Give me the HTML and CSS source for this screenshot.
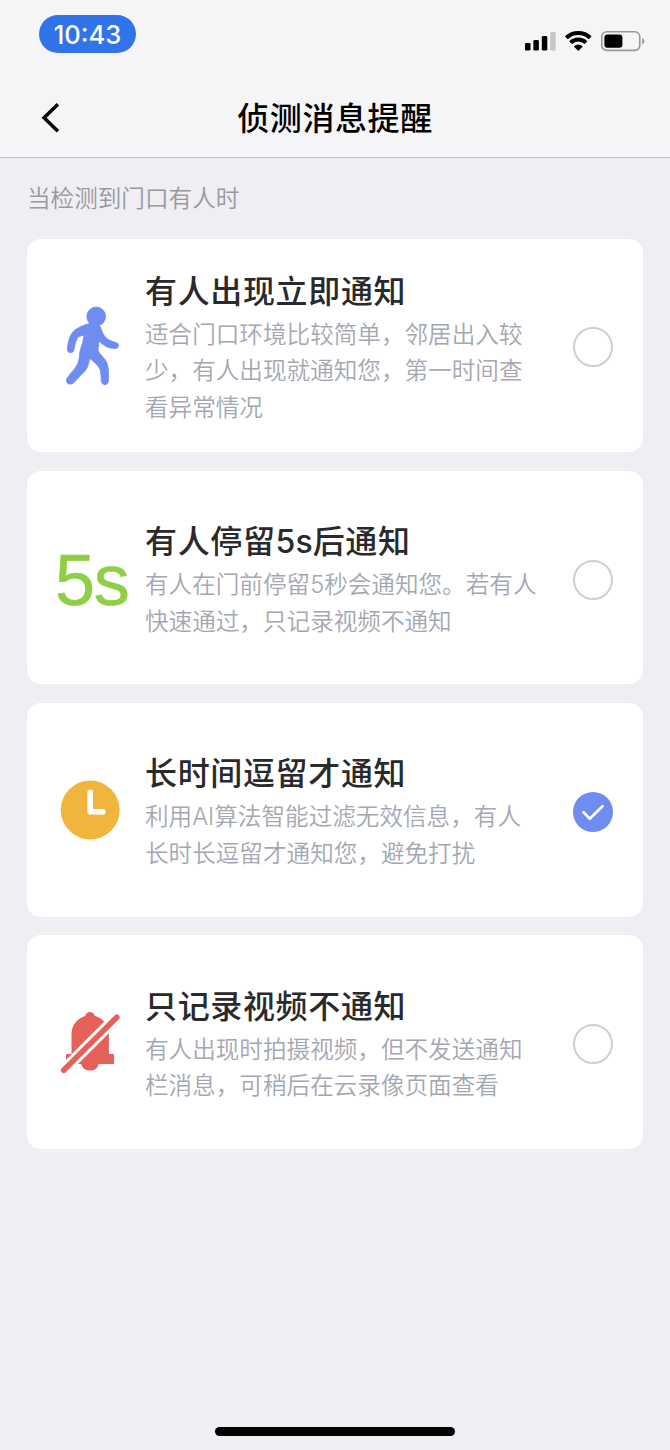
FILE: index.html
```
<!DOCTYPE html>
<html lang="zh-CN">
<head>
<meta charset="utf-8">
<title>侦测消息提醒</title>
<link rel="stylesheet" href="styles.css">
</head>
<body>
<div class="screen">
  <header class="header">
    <div class="status">
      <span class="time">10:43</span>
      <svg class="indicators" width="120" height="24" viewBox="0 0 120 24">
        <rect x="0" y="15" width="5.5" height="7.5" rx="1.3"/>
        <rect x="8.4" y="12" width="5.5" height="10.5" rx="1.3"/>
        <rect x="16.8" y="8" width="5.5" height="14.5" rx="1.3"/>
        <rect x="25.2" y="4" width="5.5" height="18.5" rx="1.3" fill="#c7c7c9"/>
        <g fill="none" stroke="#000" stroke-width="4.1">
          <path d="M41.4 9.8a17 17 0 0 1 23.8 0"/>
          <path d="M45.6 14.6a11 11 0 0 1 15.4 0"/>
        </g>
        <path d="M48.8 18.4a6.400 6.400 0 0 1 9 0l-4.500 4.500z"/>
        <rect x="76.8" y="3.8" width="38" height="18.6" rx="5" fill="none" stroke="#98989a" stroke-width="1.6"/>
        <rect x="79.4" y="6.4" width="18" height="13.4" rx="3"/>
        <path d="M117.2 10v6.4q2.2-1 2.2-3.2t-2.2-3.2z" fill="#98989a"/>
      </svg>
    </div>
    <div class="nav">
      <svg class="back" width="20" height="32" viewBox="0 0 20 32"><path d="M17.9 2.3 4.100 15.800l13.800 13.500" fill="none" stroke="#000" stroke-width="3.500"/></svg>
      <h1 class="nav-title">侦测消息提醒</h1>
    </div>
  </header>
  <main class="content">
    <p class="hint">当检测到门口有人时</p>
    <section class="card">
      <div class="icon">
        <svg width="90" height="100" viewBox="0 0 90 100" fill="#6f8df0" stroke="#6f8df0" stroke-width=".8" stroke-linejoin="round">
          <circle cx="46.2" cy="21.5" r="9.4"/>
          <path d="M38.7 28.7C31 31 25 34 22.5 37.5C19 42 18 48 17.3 54C17 58.5 23.3 59.3 24 54.5C25 49 26 44 29 41.5L34 40C33.500 46 31.500 51 30 56C29 62 29.500 66 27 70C24.500 75 20 78.500 17 83.500C14.500 88.500 20.500 91 24 87.500C28 83 33.500 78 36.500 74C38.800 70.500 38.500 66.500 40 63.500C44.500 67.500 49 71 50.200 75C51 78.500 51 82 51.300 86C52 91 58 91 58.300 86C58.800 80 58.800 73 57 68C55 63 50 60 48 55.500L49 46C53.500 50.500 58 53.500 65 53.500C69.500 53.500 69.500 48.500 66 47.500C60.500 46 55.500 43.500 53.500 39.500C51.500 35.500 50.500 30.500 47.500 29Z"/>
        </svg>
      </div>
      <div class="text">
        <h2 class="title">有人出现立即通知</h2>
        <p class="desc">适合门口环境比较简单，邻居出入较<br>少，有人出现就通知您，第一时间查<br>看异常情况</p>
      </div>
      <span class="radio"></span>
    </section>
    <section class="card">
      <div class="icon five">5s</div>
      <div class="text">
        <h2 class="title">有人停留<span class="latin">5s</span>后通知</h2>
        <p class="desc">有人在门前停留<span class="latin">5</span>秒会通知您。若有人<br>快速通过，只记录视频不通知</p>
      </div>
      <span class="radio"></span>
    </section>
    <section class="card">
      <div class="icon">
        <svg width="90" height="80" viewBox="0 0 90 80"><circle cx="40.200" cy="40" r="29.500" fill="#f1b53d"/><path d="M40.200 22.200v19.600h12.800" fill="none" stroke="#fff" stroke-width="5.600" stroke-linecap="round" stroke-linejoin="round"/></svg>
      </div>
      <div class="text">
        <h2 class="title">长时间逗留才通知</h2>
        <p class="desc">利用<span class="latin">AI</span>算法智能过滤无效信息，有人<br>长时长逗留才通知您，避免打扰</p>
      </div>
      <span class="radio checked"><svg width="40" height="40" viewBox="0 0 40 40"><path d="m10.500 20.300 6.300 6.500L29.500 14.300" fill="none" stroke="#fff" stroke-width="2.700" stroke-linecap="round" stroke-linejoin="round"/></svg></span>
    </section>
    <section class="card">
      <div class="icon bell">
        <svg width="90" height="80" viewBox="0 0 90 80">
          <g fill="#e46058">
            <circle cx="40" cy="16.800" r="4.800"/>
            <path d="M21.500 54V34a18.700 18.700 0 0 1 37.400 0v20h4.200q1 0 1 1v8q0 1-1 1H48.900a9.300 9.300 0 0 1-17.800 0H17q-1 0-1-1v-8q0-1 1-1z"/>
          </g>
          <path d="M13.500 70.500 67 17" fill="none" stroke="#fff" stroke-width="11.500"/>
          <path d="M13.700 70.300 66.800 17.200" fill="none" stroke="#e46058" stroke-width="5.600" stroke-linecap="round"/>
        </svg>
      </div>
      <div class="text">
        <h2 class="title">只记录视频不通知</h2>
        <p class="desc">有人出现时拍摄视频，但不发送通知<br>栏消息，可稍后在云录像页面查看</p>
      </div>
      <span class="radio"></span>
    </section>
  </main>
  <footer class="footer"><div class="home-bar"></div></footer>
</div>
</body>
</html>
```
FILE: styles.css
```
* { box-sizing: border-box; margin: 0; padding: 0; }
body {
  background: #eeeef3;
  font-family: "Noto Sans CJK SC", sans-serif;
}
.screen {
  display: flex;
  flex-direction: column;
  width: 670px;
  height: 1450px;
  background: #eeeef3;
}
.header {
  height: 158px;
  background: #f5f5f7;
  border-bottom: 1px solid #c3c3c7;
}
.status {
  display: flex;
  justify-content: space-between;
  align-items: flex-start;
  height: 78px;
  padding: 15px 25px 0 39px;
}
.time {
  width: 97px;
  height: 38px;
  padding-top: 1px;
  border-radius: 19px;
  background: #3173e8;
  color: #fff;
  font: 500 25.5px/38px Inter, sans-serif;
  text-align: center;
}
.indicators { margin-top: 13px; }
.nav {
  display: grid;
  grid-template-columns: 60px 1fr 60px;
  align-items: center;
  height: 79px;
}
.back { margin-left: 40px; }
.nav-title {
  padding-bottom: 4px;
  font-size: 32px;
  font-weight: 500;
  letter-spacing: .6px;
  line-height: 48px;
  text-align: center;
}
.content { flex: 1; padding: 0 27px; }
.hint {
  height: 80.5px;
  color: #98989d;
  font-size: 23.6px;
  font-weight: 350;
  line-height: 78px;
}
.card {
  display: grid;
  grid-template-columns: 118px 1fr 40px;
  align-items: center;
  height: 213.5px;
  margin-bottom: 18.8px;
  padding-right: 30px;
  border-radius: 14px;
  background: #fff;
}
.icon { display: flex; padding-left: 23px; }
.bell { padding-bottom: 4px; }
.five {
  padding: 5px 0 0 28px;
  color: #8fcf46;
  font: 72px/80px "Liberation Sans", sans-serif;
  letter-spacing: -1.2px;
  -webkit-text-stroke: .6px #8fcf46;
}
.title {
  padding-bottom: 4px;
  color: #2a2a2c;
  font-size: 32px;
  font-weight: 500;
  letter-spacing: .65px;
  line-height: 44px;
}
.desc {
  color: #a4a7b2;
  font-size: 23.6px;
  font-weight: 350;
  line-height: 36.5px;
  white-space: nowrap;
}
.latin { font-family: Inter, sans-serif; line-height: 0; letter-spacing: 0; }
.radio {
  width: 40px;
  height: 40px;
  margin-top: 4px;
  border: 2px solid #cfcfcf;
  border-radius: 50%;
}
.checked { border: 0; background: #6f8df0; }
.footer {
  display: flex;
  justify-content: center;
  height: 23px;
}
.home-bar {
  width: 240px;
  height: 9px;
  border-radius: 5px;
  background: #000;
}
```
